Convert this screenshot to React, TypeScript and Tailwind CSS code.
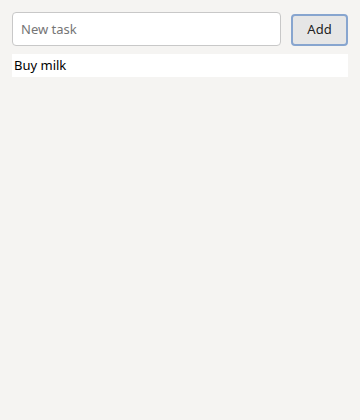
import { useState } from "react";

export default function App() {
  const [text, setText] = useState("");
  const [tasks, setTasks] = useState<string[]>(["Buy milk"]);

  const add = () => {
    if (!text.trim()) return;
    setTasks([...tasks, text.trim()]);
    setText("");
  };

  return (
    <div
      className="min-h-[420px] w-full bg-[#f5f4f2] p-3 text-[13px] text-black"
      style={{ fontFamily: '"Noto Sans", "Open Sans", sans-serif' }}
    >
      <div className="flex items-center gap-[10px]">
        <input
          value={text}
          onChange={(e) => setText(e.target.value)}
          placeholder="New task"
          className="h-[34px] flex-1 rounded-[4px] border border-[#c8c8c8] bg-white px-2 text-[13px] outline-none placeholder:text-[#757575]"
        />
        <button
          onClick={add}
          className="mt-[1px] h-[32px] w-[57px] rounded-[4px] border-2 border-[#87a5cf] bg-[#e6e6e6] text-[13px] text-[#222]"
        >
          Add
        </button>
      </div>
      <ul className="mt-[8px] flex flex-col gap-1">
        {tasks.map((t, i) => (
          <li key={i} className="h-[23px] bg-white px-[2px] leading-[23px]">
            {t}
          </li>
        ))}
      </ul>
    </div>
  );
}
